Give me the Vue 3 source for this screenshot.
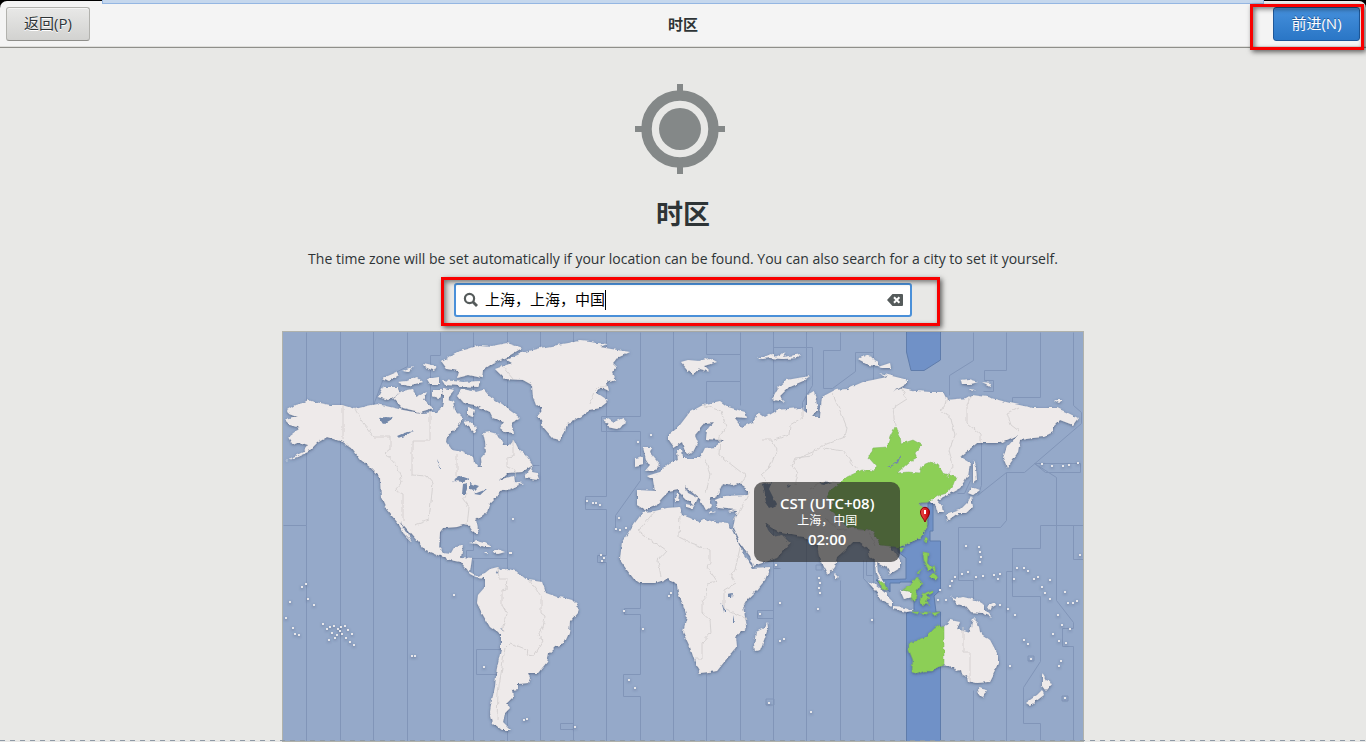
<script setup>
import { ref } from 'vue'

const query = ref('上海，上海，中国')

// Regular boundaries of the hour zones that run from pole to pole
const meridians = [340, 373, 507, 540, 573, 673, 773, 806, 873]

const zoneLines = [
  'M306 332V525H283M440 332V355H430V440M407 332V366L383 378L374 402V404M407 530V741M440 532V741',
  'M473 332V550H466V558H507V545M473 560V741M606 332V496H585V509H606V555H597V562H606V741',
  'M640 332V416H601V431H640V480L615 515V530M640 582V608H624V614H640V674H623V696H640V741',
  'M706 332V354H740V332M740 354V381H706V402M740 381V405M706 674V741M740 650V741',
  'M773 332V347H812V385L802 402V407M773 560V568H780M773 610H757V618H773',
  'M840 332V350H823V388H832L855 371V352H873V332M840 580V741M873 585V741',
  'M973 332V360L949 375V395M1006 332V370H984V380H993V391H983M1040 332V397H1012V402',
  'M1073 332V405L1081 412V423L1024 472H1006L977 495M1034 463H1080V472H1045L1034 463',
  'M1034 463L1056 477V600L1073 622V628H1062V646H1073V741M1006 472V520L1000 527H958V580H973V602',
  'M973 690V741M1006 630V741M1006 741V571H1012V548H1040V525H1083M1012 548V596H1040V661L1023 687V723H1040V741',
  'M1073 525V559H1083M476 649H500M476 649V674H497M560 723H573M560 723V729H573M524 465H539M863 560V578L885 602',
  'M866 560V575H872M970 480L964 493H957M981 430V485L978 493M373 741V580M340 741V445M306 741V525'
]

const borders = [
  'M343 405V439M355 409L361 420L374 437H390V449L385 453L397 466L402 482L395 490L403 494V521M430 413V441H412V475L427 476L433 483L429 520L415 525M457 455V477M467 493L463 500L469 508L467 525',
  'M498 567L499 579H507L506 589L502 590V605L507 614L503 626L504 632M529 580L541 596V613L545 616L543 628L538 635L543 641L534 656L527 655L528 650L510 643L505 648L498 693L497 720',
  'M513 440V456L507 457V467L515 470V477M590 403L594 392L600 386L607 386M501 365L513 379',
  'M655 511L638 531L666 551L658 560L661 577M680 515L679 537L689 542L710 550V563L707 567L717 581L708 583L707 596L702 602V613L710 620L711 633L702 643V659H695M740 548L735 570L731 575L736 583L724 590V608L747 619',
  'M703 405L721 411L726 427L720 436L719 455L728 462L746 476L739 485M705 458L710 475L706 493M750 491L740 510L733 521M803 407L803 417L790 425L789 435L774 440M762 439H771L777 450L770 467L761 475L766 481M815 448L812 456L795 458L792 466L798 473L795 485',
  'M832 393L842 415L847 428L845 437L824 445L817 450L795 460M824 448L843 451L857 469M901 388L907 399L893 408L895 426',
  'M972 395L967 405V423L981 435V443M947 397L944 408L940 410L951 418L955 435L949 450L953 466L947 478M1019 407L1007 413L1011 425L1019 431M963 627V652H970V682M840 483L824 481L810 489M875 545L868 530L850 528L838 530L825 518'
]

const land = [
  'M287 410L295 405L303 403L308 400L314 402L320 403L330 405L342 405L355 409L367 406L377 404L390 407L403 410L413 412L423 413L437 412L443 407L445 399L453 402L455 410L463 418L458 427L448 435L447 443L452 450L462 452L473 457L474 462L478 467L482 467L481 458L486 452L485 442L483 433L490 432L497 434L503 445L510 445L514 440L518 448L526 455L533 465L522 472L507 473L500 480L513 476L514 482L523 483L510 489L500 492L495 498L490 503L487 512L476 520L479 534L475 534L470 526L463 525L457 527L443 528L440 532L439 548L443 552L451 553L455 546L463 545L461 557L472 558L470 572L477 576L485 573L486 578L476 577L470 574L460 562L450 560L440 556L424 549L413 536L400 521L412 542L405 535L398 523L387 510L381 497L380 477L371 468L361 460L352 448L343 442L327 437L317 443L308 452L297 457L285 461L303 452L308 445L299 442L293 445L288 437L300 428L290 425L285 420L297 417L289 414Z',
  'M378 397L383 387L397 387L400 393L388 400ZM393 398L403 391L413 389L416 397L427 392L423 400L433 408L420 412L403 408ZM383 378L397 372L399 375L389 381ZM397 382L407 381L417 377L423 382L407 386ZM402 371L413 367L409 372ZM423 363L437 366L434 371L425 367ZM427 379L439 377L439 384L430 384ZM442 380L463 382L480 381L478 387L445 385ZM432 390L443 390L439 398L432 396Z',
  'M442 362L457 352L468 349L480 345L492 346L507 343L522 348L507 357L493 363L483 370L482 378L469 375L457 378L459 371L447 369ZM443 388L455 390L449 397L448 407L443 401ZM457 395L462 389L477 392L484 390L490 397L502 405L512 412L520 418L512 422L514 433L505 432L500 428L504 422L493 418L490 412L475 405L464 403ZM467 407L475 410L473 417L467 415ZM463 422L469 421L477 428L475 433L469 427Z',
  'M533 466L527 473L525 478L539 480L537 473L532 472Z',
  'M495 369L512 363L507 360L522 353L540 348L557 345L580 341L607 344L600 347L611 349L630 352L617 358L613 363L617 367L612 373L615 380L607 383L609 391L601 387L596 393L608 401L600 408L590 410L583 415L574 421L567 423L565 432L560 440L552 438L543 428L541 420L537 416L543 408L536 405L533 397L532 385L523 380L505 379Z',
  'M603 420L608 418L614 422L623 418L627 423L617 429L607 427L609 424Z',
  'M485 573L490 569L498 567L500 570L509 569L518 572L528 580L542 582L546 593L557 597L565 598L572 600L579 607L578 613L570 622L569 633L564 644L555 647L549 653L547 662L538 673L528 673L530 678L528 683L518 684L518 689L512 690L513 697L507 703L510 708L505 713L503 722L511 730L502 730L493 723L490 712L492 700L495 687L497 667L501 650L501 635L490 627L483 615L477 603L478 595L485 587Z',
  'M469 543L477 541L485 543L492 547L485 547L477 544ZM493 552L497 549L505 552L498 554ZM484 552L488 552L487 554ZM508 552H511V554H508Z',
  'M643 512L655 511L667 508L679 507L682 515L690 518L700 523L703 519L715 522L728 523L732 530L740 547L745 557L753 568L770 567L765 580L757 590L747 600L743 607L747 627L735 637L736 647L728 657L717 671L700 673L697 668L690 647L683 632L687 617L683 604L678 593L677 584L667 579L655 583L640 583L634 579L627 570L620 560L622 542L632 527Z',
  'M767 622L768 628L764 640L760 650L755 651L754 645L756 632L764 628Z',
  'M637 490L655 491L653 480L647 476L660 472L667 465L678 460L677 450L682 450L683 458L700 458L705 448L715 447L723 440L706 439L707 430L713 422L705 423L695 435L698 442L693 452L687 455L682 442L674 447L669 440L669 434L680 425L690 412L703 405L720 401L728 407L745 412L747 418L734 417L742 427L753 422L758 412L765 417L777 410L800 408L807 413L807 395L814 391L818 410L812 417L820 417L822 397L835 390L847 389L863 382L887 377L880 373L908 380L908 383L893 392L903 388L916 391L930 392L943 392L947 400L967 398L972 395L987 397L1010 403L1033 408L1057 408L1068 413L1078 418L1073 425L1060 420L1053 427L1053 432L1043 437L1033 438L1020 440L1018 452L1007 468L1003 458L1007 447L1018 435L1000 443L977 443L960 457L970 463L968 475L960 488L947 495L937 500L943 507L944 513L938 513L935 503L927 500L918 503L922 508L927 512L927 527L920 538L908 543L898 547L890 545L892 549L900 560L900 568L890 574L887 568L877 563L878 573L887 588L885 590L880 580L876 573L875 560L870 557L868 548L860 542L853 542L845 550L837 557L835 567L828 575L820 560L817 545L810 542L803 537L797 536L782 533L772 528L765 523L768 530L773 537L782 535L790 543L777 558L753 566L750 556L740 543L733 528L737 510L718 508L715 500L725 496L748 495L748 490L738 483L732 485L723 483L716 497L709 497L712 506L706 510L700 499L685 486L688 493L698 498L694 506L686 498L678 490L668 492L663 497L655 506L645 510L637 505Z',
  'M643 447L652 447L650 453L655 459L660 465L655 470L645 471L650 465L646 459ZM635 458L643 456L643 465L635 467Z',
  'M681 362L688 360L699 361L710 358L717 362L704 366L710 372L699 369L693 376L687 369ZM772 399L778 388L787 380L798 378L810 376L803 381L789 387L779 397L784 402L775 400ZM757 357L764 357L771 354L775 357L786 352L783 357L801 354L797 358L783 359L771 358L761 359Z',
  'M858 359L869 354L872 359L879 362L879 366L869 365ZM878 367L890 363L891 368L882 368ZM961 380L968 379L978 382L971 384L962 384ZM982 382L991 383L990 386ZM969 389L976 390L972 392ZM1054 400L1062 400L1059 403Z',
  'M973 460L976 468L977 481L973 484ZM972 487L980 490L973 495L968 493ZM971 496L973 507L966 513L958 513L947 521L946 515L960 510L968 502Z',
  'M868 582L875 585L885 593L892 600L892 606L883 602L876 591ZM893 607L905 608L913 611L907 612L893 609ZM900 590L912 592L913 597L904 599ZM835 573L839 577L836 579ZM950 596L955 599L963 597L976 600L984 605L984 609L992 617L982 613L970 612L965 606L957 604ZM987 606L995 602L996 605L989 609Z',
  'M944 627L950 620L960 622L957 629L970 633L973 618L978 623L980 633L990 640L998 655L998 663L995 670L989 682L977 683L968 681L967 676L963 677L961 670L956 671L953 667L943 665L936 667V660L943 650ZM978 688L987 690L983 697L979 695Z',
  'M1042 673L1046 680L1053 683L1046 691L1042 686ZM1042 690L1044 695L1036 701L1031 706L1026 703L1037 695Z',
  'M677 493L679 493L678 502L675 502ZM686 504L694 506L692 509L686 507ZM710 511L717 512L711 513ZM728 512L734 510L731 513Z'
]

const green = [
  'M895 427L900 435L901 444L913 440L922 445L915 453L917 458L908 463L897 473L908 472L920 473L923 465L930 462L938 465L943 473L956 477L953 485L947 493L937 496L928 502L918 503L922 508L927 512L927 527L920 538L908 543L899 547L880 545L873 530L847 527L840 519L830 510L833 502L827 497L831 490L840 483L847 477L862 470L875 472L877 467L869 458L873 448L887 447L890 437Z',
  'M926 538L928 539L925 543L924 541ZM899 548L904 548L901 552ZM879 580L886 585L888 590L882 589ZM902 590L910 586L917 577L922 583L917 590L915 602L911 599L912 592ZM923 552L928 553L927 563L932 568L929 571L924 561ZM934 566L936 572L931 568ZM934 572L938 578L936 581L929 577ZM917 573L923 567L918 574ZM922 594L933 590L933 592L925 595L930 598L926 600L930 605L926 603L923 606L920 601Z',
  'M911 612H920L918 614ZM921 612H930L925 615ZM931 613L940 612L934 616Z',
  'M909 643L918 640L927 636L934 629L940 625L944 627V665L938 667L932 671L924 671L917 674L912 672L913 660L909 650Z'
]

const lakes = [
  'M379 418L386 417L393 418L389 421L383 424ZM397 436L404 433L413 431L405 436L399 438ZM437 459L442 469L439 467ZM453 481L461 476L469 479L464 482ZM463 484L468 483L466 494L462 494ZM470 483L479 486L474 491L470 489ZM474 494L487 489L480 495Z',
  'M887 467L894 464L901 455L898 463L890 467ZM728 594L733 593L732 598L728 598ZM721 601L726 612L724 612ZM733 615L735 624L733 624ZM496 570L499 571L498 573ZM501 628L504 629L503 630Z',
  'M762 485L772 482L769 489L777 505L770 508L766 502L764 493ZM820 484L825 481L832 482L824 485ZM787 485L791 484L788 488Z'
]

const dots = [
  [302, 587], [306, 584], [308, 599], [314, 605], [290, 602], [286, 618], [293, 628], [295, 634], [299, 635],
  [323, 624], [327, 629], [330, 627], [334, 626], [338, 629], [341, 627], [345, 626], [332, 633], [337, 635],
  [342, 634], [346, 638], [350, 642], [354, 645], [329, 640], [340, 631], [348, 630], [335, 638], [352, 634],
  [454, 595], [484, 667], [412, 656], [415, 656], [587, 501], [593, 503], [596, 503], [600, 505], [513, 519],
  [619, 518], [616, 529], [620, 530], [626, 528], [601, 555], [604, 558], [602, 561], [671, 593], [669, 596],
  [624, 611], [643, 629], [629, 680], [635, 688], [524, 720], [527, 719], [575, 727], [760, 614], [780, 603],
  [784, 639], [780, 641], [819, 578], [820, 583], [819, 588], [820, 593], [818, 609], [872, 620], [769, 703],
  [811, 712], [776, 565], [979, 547], [980, 552], [981, 557], [980, 562], [966, 546], [968, 572], [976, 577],
  [983, 576], [962, 574], [952, 581], [950, 586], [955, 577], [940, 590], [946, 600], [938, 600], [994, 575],
  [998, 579], [1000, 574], [1014, 579], [1017, 568], [1024, 568], [1028, 571], [1034, 579], [1038, 577],
  [1050, 580], [1042, 587], [1045, 593], [1050, 599], [1065, 592], [1068, 603], [1073, 603], [1077, 601],
  [1058, 615], [1062, 625], [1053, 634], [1059, 641], [1070, 629], [1066, 643], [1061, 661], [1059, 666],
  [1010, 666], [1031, 659], [1024, 640], [1028, 644], [1000, 605], [1008, 609], [1015, 615], [1042, 464],
  [1052, 466], [1063, 466], [1069, 465], [1078, 463], [1080, 555], [1065, 698], [638, 442], [651, 435]
]
</script>

<template>
  <div class="window">
    <header class="titlebar">
      <button type="button" class="btn">返回(P)</button>
      <h1 class="title">时区</h1>
      <div class="next-wrap">
        <button type="button" class="btn primary">前进(N)</button>
        <span class="mark mark-next"></span>
      </div>
      <span class="strip"></span>
    </header>

    <main class="page">
      <svg class="emblem" viewBox="0 0 96 90" aria-hidden="true">
        <circle cx="45" cy="45" r="33.5" fill="none" stroke="#848888" stroke-width="10.5" />
        <circle cx="45" cy="45" r="21" fill="#848888" />
        <path d="M42 0h6v7h-6zM42 83h6v7h-6zM0 42h7v6H0zM83 42h7v6h-7z" fill="#848888" />
      </svg>
      <h2 class="heading">时区</h2>
      <p class="lead">The time zone will be set automatically if your location can be found. You can also search for a city to set it yourself.</p>

      <div class="search">
        <svg class="glass" viewBox="0 0 16 16" aria-hidden="true">
          <circle cx="6.5" cy="6.5" r="4.6" fill="none" stroke="#555b5b" stroke-width="2.2" />
          <path d="M10 10l4 4" stroke="#555b5b" stroke-width="2.8" />
        </svg>
        <input v-model="query" type="text" aria-label="搜索城市" />
        <span class="caret"></span>
        <button type="button" class="clear" aria-label="清除" @click="query = ''">
          <svg viewBox="0 0 16 12" aria-hidden="true">
            <path d="M5.500 0H15a1 1 0 0 1 1 1v10a1 1 0 0 1-1 1H5.500L0 6z" fill="#555b5b" />
            <path d="M7 3.300l5.400 5.400M12.400 3.300L7 8.700" stroke="#fff" stroke-width="2" />
          </svg>
        </button>
        <span class="mark mark-search"></span>
      </div>

      <div class="map">
        <svg class="world" viewBox="283 332 800 409" role="img" aria-label="世界时区地图">
          <defs>
            <filter id="coast" x="-2%" y="-2%" width="104%" height="104%" color-interpolation-filters="sRGB">
              <feTurbulence type="fractalNoise" baseFrequency="0.18" numOctaves="2" seed="4" result="noise" />
              <feDisplacementMap in="SourceGraphic" in2="noise" scale="4" xChannelSelector="R" yChannelSelector="G" />
            </filter>
            <filter id="shade" x="-2%" y="-2%" width="104%" height="104%">
              <feDropShadow dx="0" dy="1" stdDeviation="1.600" flood-color="#33415f" flood-opacity="0.6" />
            </filter>
            <linearGradient id="pin" x1="0" x2="1">
              <stop offset="0" stop-color="#f0504c" />
              <stop offset="1" stop-color="#c4000a" />
            </linearGradient>
          </defs>
          <rect x="283" y="332" width="800" height="409" fill="#95a9c9" />
          <g fill="#7091c7" stroke="#5f7cab">
            <path d="M906.500 331H940.500V360L924 370.500H911L906.500 352Z" />
            <path d="M898 548L920 538L928 525V503H933V531H930V541H940.500V590L934 596L936 612H940.500V742H906.500V613L914 610V582H900V583H890V592L876 580L906 579V558L898 552Z" />
          </g>
          <g fill="none" stroke="#8195b8">
            <path v-for="x in meridians" :key="x" :d="`M${x}.5 332V741`" />
            <path v-for="(d, i) in zoneLines" :key="i" :d="d" transform="translate(.5 .5)" />
            <path d="M766 699h8v6h-8zM1028 656h6v5h-6zM1062 696h6v5h-6zM816 565h6v5h-6z" />
          </g>
          <g filter="url(#shade)">
            <g filter="url(#coast)">
              <path v-for="(d, i) in land" :key="i" :d="d" fill="#eeeaea" />
              <path v-for="(d, i) in green" :key="i" :d="d" fill="#8ccf57" stroke="#7bb35a" stroke-width=".5" />
            </g>
            <rect v-for="(p, i) in dots" :key="i" :x="p[0] - 1" :y="p[1] - 1" width="2" height="2" fill="#e6e6ea" />
          </g>
          <g filter="url(#coast)">
            <path v-for="(d, i) in lakes" :key="i" :d="d" fill="#7388aa" />
            <path v-for="(d, i) in borders" :key="i" :d="d" fill="none" stroke="#d3cfcf" stroke-width=".9" />
          </g>
          <path d="M925 522C923.500 518 920.500 516.500 920.500 512A4.500 4.700 0 0 1 929.500 512C929.500 516.500 926.500 518 925 522Z" fill="url(#pin)" stroke="#8c0008" />
          <path d="M924 510h2v4h-2z" fill="#fff" />
        </svg>
        <div class="bubble">
          <strong>CST (UTC+08)</strong>
          <span class="place">上海，中国</span>
          <span class="time">02:00</span>
        </div>
      </div>
    </main>
    <span class="edge"></span>
  </div>
</template>

<style>
body {
  background: #e8e8e6;
}
</style>

<style scoped>
* {
  box-sizing: border-box;
}

.window {
  position: relative;
  display: flex;
  flex-direction: column;
  height: 100vh;
  overflow: hidden;
  background: linear-gradient(#000 0 20px, #e8e8e6 20px);
  color: #2e3436;
  font-family: "Open Sans", "Noto Sans CJK SC", sans-serif;
}

.titlebar {
  position: relative;
  display: flex;
  flex: none;
  align-items: center;
  justify-content: space-between;
  height: 47px;
  margin-top: 1px;
  padding: 0 6px;
  border-bottom: 1px solid #8f8f8a;
  border-radius: 7px 7px 0 0;
  background: #f4f4f4;
  box-shadow: inset 0 -1px #dededb;
}

.strip {
  position: absolute;
  top: -1px;
  right: 102px;
  left: 102px;
  height: 4px;
  border: 1px solid #94b6e2;
  border-top: 0;
  background: #c5d7ed;
}

.title {
  position: absolute;
  right: 0;
  left: 0;
  margin: 0;
  font-size: 15px;
  font-weight: 700;
  line-height: 20px;
  text-align: center;
  pointer-events: none;
}

.btn {
  min-width: 84px;
  height: 34px;
  padding: 0 15px 2px;
  border: 1px solid #b2b2ae;
  border-bottom-color: #8e8e8a;
  border-radius: 3px;
  background: linear-gradient(#e8e8e7, #d2d2d0);
  box-shadow: inset 0 1px #f5f5f5;
  color: #2e3436;
  font-family: inherit;
  font-size: 15px;
  line-height: 20px;
  text-shadow: 0 1px #fff;
}

.primary {
  min-width: 87px;
  border-color: #1f5899;
  background: linear-gradient(#4590dc, #2a76c6);
  box-shadow: inset 0 1px #5a9fe4;
  color: #fff;
  text-shadow: 0 -1px #1f5899;
}

.next-wrap {
  position: relative;
}

.mark {
  position: absolute;
  z-index: 2;
  border: 3px solid #f80000;
  box-shadow: 2px 2px 5px rgba(0, 0, 0, 0.6), inset 2px 2px 5px rgba(0, 0, 0, 0.5);
  pointer-events: none;
}

.mark-next {
  top: -3px;
  right: -4px;
  bottom: -9px;
  left: -23px;
}

.mark-search {
  top: -8px;
  right: -30px;
  bottom: -11px;
  left: -15px;
}

.page {
  display: flex;
  flex: 1;
  flex-direction: column;
  align-items: center;
  min-height: 0;
  padding-top: 36px;
  background: #e8e8e6;
}

.emblem {
  flex: none;
  width: 96px;
  height: 90px;
}

.heading {
  margin: 20px 0 15px;
  font-size: 27px;
  font-weight: 700;
  line-height: 40px;
}

.lead {
  margin: 0 0 14px;
  font-size: 14px;
  line-height: 20px;
  text-align: center;
}

.search {
  position: relative;
  display: flex;
  flex: none;
  align-items: center;
  width: 458px;
  max-width: 90%;
  height: 34px;
  margin-bottom: 14px;
  padding: 0 7px;
  border: 2px solid #4a90d9;
  border-radius: 3px;
  background: #fff;
}

.glass {
  flex: none;
  width: 16px;
  height: 16px;
  margin-right: 6px;
}

.search input {
  flex: 1;
  min-width: 0;
  padding: 0 0 2px;
  border: 0;
  outline: 0;
  background: none;
  color: #000;
  font-family: inherit;
  font-size: 15px;
  line-height: 24px;
}

.caret {
  position: absolute;
  top: 5px;
  left: 149px;
  width: 1px;
  height: 20px;
  background: #000;
}

.clear {
  display: flex;
  padding: 0;
  border: 0;
  background: none;
}

.clear svg {
  width: 16px;
  height: 12px;
}

.map {
  position: relative;
  flex: none;
  width: 802px;
  max-width: 100%;
  border: 1px solid #b0b2ac;
}

.world {
  display: block;
  width: 100%;
}

.bubble {
  position: absolute;
  top: 150px;
  left: 58.9%;
  display: flex;
  flex-direction: column;
  align-items: center;
  width: 146px;
  padding: 12px 0 14px;
  border-radius: 9px;
  background: rgba(40, 40, 40, 0.66);
  color: #fff;
}

.bubble strong {
  font-size: 15px;
  font-weight: 600;
  line-height: 18px;
}

.place {
  font-size: 12px;
  line-height: 18px;
}

.time {
  font-size: 15px;
  font-weight: 600;
  line-height: 18px;
}

.edge {
  position: absolute;
  right: 0;
  bottom: 1px;
  left: 0;
  height: 1px;
  background: repeating-linear-gradient(90deg, #8f9aa6 0 5px, transparent 5px 10px);
}
</style>
